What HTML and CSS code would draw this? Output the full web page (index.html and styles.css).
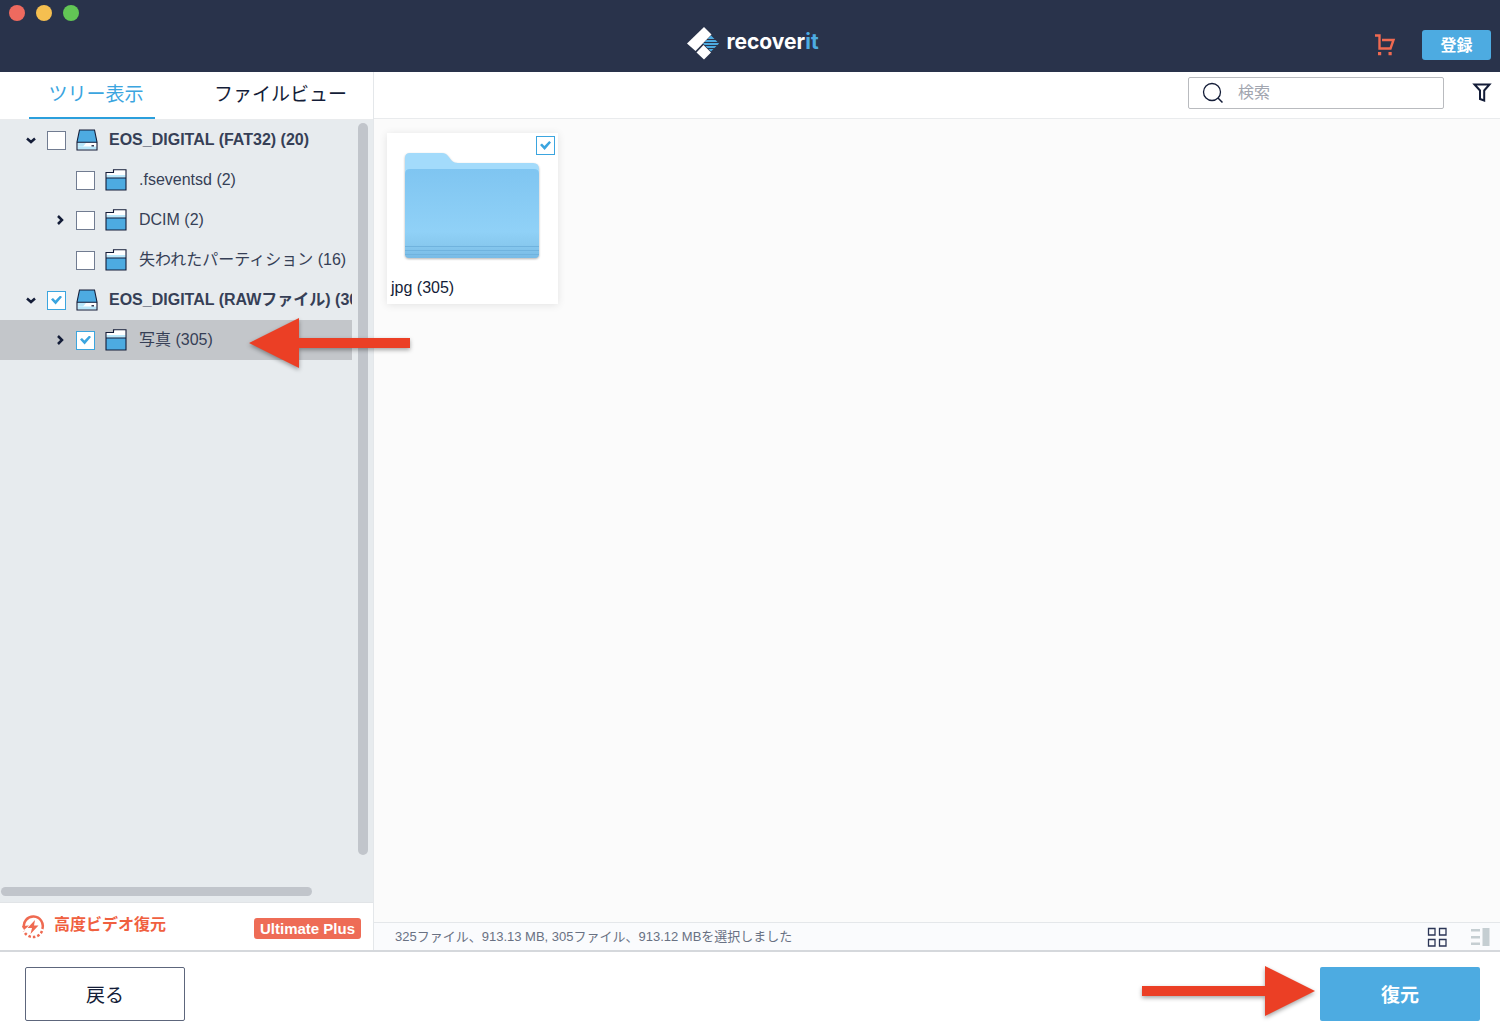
FILE: index.html
```html
<!DOCTYPE html>
<html lang="ja">
<head>
<meta charset="utf-8">
<meta name="viewport" content="width=device-width, initial-scale=1">
<title>recoverit</title>
<link rel="stylesheet" href="styles.css">
</head>
<body>
<svg class="defs" width="0" height="0" aria-hidden="true">
  <symbol id="drive" viewBox="0 0 23 23">
    <path d="M3.500 1H18.500L21 13V21H1V13Z" fill="#4dabe1"/>
    <path d="M1 13.500H21V21H1Z" fill="#fff"/>
    <path d="M1.500 14H10L7 17.500H1.500Z" fill="#b9e7fa"/><path d="M1.500 17.500H20.500V20.500H1.500Z" fill="#b9e7fa"/>
    <path d="M3.500 1H18.500L21 13V21H1V13ZM1 13.300H21" fill="none" stroke="#141d38" stroke-width="1.100"/>
    <path d="M15.500 16.800h2.500" stroke="#141d38" stroke-width="1.300"/>
  </symbol>
  <symbol id="folder" viewBox="0 0 23 23">
    <path d="M1 3.500H8L10 .8H21V21H1Z" fill="#fff"/>
    <path d="M1.500 6H20.500V9H1.500Z" fill="#b9e7fa"/>
    <path d="M1 9H21V21H1Z" fill="#4dabe1"/>
    <path d="M1 3.500H8.500V.8H21V21H1ZM1 9H21" fill="none" stroke="#141d38" stroke-width="1.100"/>
  </symbol>
  <symbol id="down" viewBox="0 0 12 12"><path d="M2 4.500L6 8L10 4.500" fill="none" stroke="#141d38" stroke-width="2.500"/></symbol>
  <symbol id="right" viewBox="0 0 12 12"><path d="M4 2L8 6L4 10" fill="none" stroke="#141d38" stroke-width="2.500"/></symbol>
</svg>
<div class="app">
  <header class="titlebar">
    <div class="lights">
      <button class="light light-close" aria-label="閉じる"></button>
      <button class="light light-min" aria-label="最小化"></button>
      <button class="light light-max" aria-label="拡大"></button>
    </div>
    <div class="brand">
      <svg width="33" height="33" viewBox="0 0 33 33" aria-hidden="true">
        <path d="M24 8.500L32 16.500L24 24.500L16 16.500Z" fill="#4dabe1"/>
        <path d="M17 12.500H31M15 15.500H33M15 18.500H33M17 21.500H29" stroke="#29334b" stroke-width="1"/>
        <path d="M17 0L24.500 7.500L8.500 24L0 16.500Z" fill="#fff"/>
        <path d="M16.500 18L24 25.500L17 32.500L9.500 25.500Z" fill="#fff"/>
      </svg>
      <span class="brand-name">recover<span class="brand-it">it</span></span>
    </div>
    <div class="account">
      <button class="icon-button" aria-label="カート">
        <svg width="22" height="22" viewBox="0 0 22 22"><path d="M1 1.500H5.500V14.500H16.500L19.500 6H8" fill="none" stroke="#ef6a51" stroke-width="2.400"/><path d="M4 18h3.200v3.200H4zM14.500 18h3.200v3.200h-3.200z" fill="#ef6a51"/></svg>
      </button>
      <button class="register">登録</button>
    </div>
  </header>

  <main class="workspace">
    <aside class="sidebar">
      <div class="tabs">
        <button class="tab tab-active">ツリー表示</button>
        <button class="tab">ファイルビュー</button>
      </div>
      <div class="tree-pane">
        <ul class="tree">
          <li class="row root"><svg class="chevron"><use href="#down"/></svg><input class="check" type="checkbox" id="t1"><svg class="kind"><use href="#drive"/></svg><label for="t1">EOS_DIGITAL (FAT32) (20)</label></li>
          <li class="row child"><span class="chevron"></span><input class="check" type="checkbox" id="t2"><svg class="kind"><use href="#folder"/></svg><label for="t2">.fseventsd (2)</label></li>
          <li class="row child"><svg class="chevron"><use href="#right"/></svg><input class="check" type="checkbox" id="t3"><svg class="kind"><use href="#folder"/></svg><label for="t3">DCIM (2)</label></li>
          <li class="row child"><span class="chevron"></span><input class="check" type="checkbox" id="t4"><svg class="kind"><use href="#folder"/></svg><label for="t4">失われたパーティション (16)</label></li>
          <li class="row root"><svg class="chevron"><use href="#down"/></svg><input class="check" type="checkbox" id="t5" checked><svg class="kind"><use href="#drive"/></svg><label for="t5">EOS_DIGITAL (RAWファイル) (305)</label></li>
          <li class="row child selected"><svg class="chevron"><use href="#right"/></svg><input class="check" type="checkbox" id="t6" checked><svg class="kind"><use href="#folder"/></svg><label for="t6">写真 (305)</label></li>
        </ul>
        <div class="track-y"><div class="thumb-y"></div></div>
        <div class="track-x"><div class="thumb-x"></div></div>
        <svg class="arrow arrow-tree" width="162" height="50" viewBox="0 0 162 50" aria-hidden="true"><path d="M0 25L50 0V20H161V30H50V50Z" fill="#eb3f25"/></svg>
      </div>
      <div class="promo">
        <svg width="24" height="24" viewBox="0 0 24 24" aria-hidden="true">
          <path d="M3 13A9.500 9.500 0 1 1 21.300 14" fill="none" stroke="#ef6a51" stroke-width="2.500"/>
          <path d="M21 16A9.700 9.700 0 0 1 3 16" fill="none" stroke="#ef6a51" stroke-width="2.500" stroke-dasharray="2.500 2"/>
          <path d="M1 11L8 10.500L3 15Z" fill="#ef6a51"/>
          <path d="M14 5L6.500 13H11L9.500 19L17.500 10.500H13Z" fill="#ef6a51"/>
        </svg>
        <a class="promo-link" href="#">高度ビデオ復元</a>
        <span class="badge">Ultimate Plus</span>
      </div>
    </aside>

    <section class="content">
      <div class="toolbar">
        <div class="search">
          <svg width="22" height="22" viewBox="0 0 22 22" aria-hidden="true"><circle cx="10" cy="10" r="8.500" fill="none" stroke="#141d38" stroke-width="1.300"/><path d="M16 16L20.500 20.500" stroke="#141d38" stroke-width="1.500"/></svg>
          <input type="search" placeholder="検索" aria-label="検索">
        </div>
        <button class="icon-button" aria-label="フィルター">
          <svg width="20" height="20" viewBox="0 0 20 20"><path d="M2.500 1.500H17.500L12.200 7.500V17.500L8 16V7.500Z" fill="none" stroke="#141d38" stroke-width="2"/></svg>
        </button>
      </div>
      <div class="files">
        <article class="card">
          <input class="check card-check" type="checkbox" id="jpg" checked>
          <svg class="big-folder" width="137" height="109" viewBox="0 0 137 109" aria-hidden="true">
            <defs><linearGradient id="front" x1="0" y1="0" x2="0" y2="1"><stop offset="0" stop-color="#7fc5f1"/><stop offset=".7" stop-color="#90d1f7"/><stop offset=".85" stop-color="#88c9ef"/><stop offset="1" stop-color="#78bbe6"/></linearGradient></defs>
            <path d="M1 22V6Q1 1 6 1H38Q42 1 44 4L48 9Q50 11 54 11H129Q135 11 135 17V30H1Z" fill="#a3dbfb"/>
            <path d="M1 22Q1 17 6 17H130Q135 17 135 22V102Q135 106 131 106H5Q1 106 1 102Z" fill="url(#front)"/>
            <path d="M1 94.500H135M1 98.500H135M1 102.500H135" stroke="#70b3de" stroke-width="1"/>
          </svg>
          <label class="card-name" for="jpg">jpg (305)</label>
        </article>
      </div>
      <div class="status">
        <span class="status-text">325ファイル、913.13 MB, 305ファイル、913.12 MBを選択しました</span>
        <button class="icon-button" aria-label="グリッド表示">
          <svg width="20" height="20" viewBox="0 0 20 20"><path d="M1.500 1.500h6.500v6.500h-6.500zM12.500 1.500h6.500v6.500h-6.500zM1.500 12.500h6.500v6.500h-6.500zM12.500 12.500h6.500v6.500h-6.500z" fill="none" stroke="#2b3556" stroke-width="1.300"/></svg>
        </button>
        <button class="icon-button" aria-label="リスト表示">
          <svg width="20" height="20" viewBox="0 0 20 20"><path d="M1 2h9v2.500H1zM1 9h9v2.500H1zM1 15.500h9V18H1zM12.500 1h7v18h-7z" fill="#c5ced2"/></svg>
        </button>
      </div>
    </section>
  </main>

  <footer class="actions">
    <button class="action back">戻る</button>
    <button class="action recover">復元</button>
    <svg class="arrow arrow-recover" width="173" height="50" viewBox="0 0 173 50" aria-hidden="true"><path d="M173 25L123 0V20H0V30H123V50Z" fill="#eb3f25"/></svg>
  </footer>
</div>
</body>
</html>
```
FILE: styles.css
```css
* { box-sizing: border-box; }

body {
  margin: 0;
  font-family: "Liberation Sans", "Noto Sans CJK JP", sans-serif;
  font-size: 16px;
  line-height: 24px;
  color: #141d38;
  background: #fff;
}

button, input { font: inherit; color: inherit; }
button { padding: 0; border: 0; background: none; cursor: pointer; }
svg { display: block; flex: none; }
.defs { position: absolute; }

.app { display: flex; flex-direction: column; min-height: 100vh; }

/* Title bar */
.titlebar {
  display: grid;
  grid-template-columns: 1fr auto 1fr;
  height: 72px;
  padding: 0 9px;
  background: #29334b;
}
.lights { display: flex; align-items: flex-start; gap: 11px; padding-top: 5px; }
.light { width: 16px; height: 16px; border-radius: 50%; }
.light-close { background: #ee6a5f; }
.light-min { background: #f5bf50; }
.light-max { background: #62c655; }
.brand { display: flex; align-items: center; gap: 6px; padding: 14px 0 0 6px; }
.brand-name { padding-bottom: 2px; font-family: Inter, sans-serif; font-size: 21px; font-weight: 700; color: #fff; }
.brand-it { color: #4dabe1; }
.account { display: flex; align-items: center; justify-content: flex-end; gap: 26px; padding-top: 18px; }
.register {
  width: 69px;
  height: 30px;
  padding-top: 2px;
  border-radius: 3px;
  background: #4dabe1;
  color: #fff;
  font-weight: 700;
}

/* Sidebar */
.workspace { display: grid; grid-template-columns: 374px 1fr; flex: 1; }
.sidebar { display: flex; flex-direction: column; border-right: 1px solid #e4e7ea; }
.tabs { display: flex; height: 48px; padding: 0 21px 0 29px; justify-content: space-between; border-bottom: 1px solid #e9ebed; }
.tab { height: 47px; padding: 0 5px 2px; font-size: 19px; }
.tab-active { width: 126px; padding: 2px 0 2px 8px; border-bottom: 2px solid #2b9fdc; color: #3ba5df; }
.tree-pane {
  position: relative;
  display: grid;
  grid-template-columns: 352px 1fr;
  grid-template-rows: 1fr 20px;
  flex: 1;
  background: #e7ebee;
}
.tree { min-width: 0; margin: 0; padding: 0; overflow: hidden; list-style: none; }
.row { display: flex; align-items: center; gap: 10px; height: 40px; padding-left: 25px; white-space: nowrap; color: #363f56; }
.root { font-weight: 700; }
.child { padding-left: 54px; }
.child label { padding-left: 1px; }
.selected { background: #c3c6ca; }
.chevron { flex: none; width: 12px; height: 12px; }
.kind { width: 23px; height: 23px; }
.check {
  display: grid;
  place-items: center;
  flex: none;
  appearance: none;
  width: 19px;
  height: 19px;
  margin: 0;
  border: 1px solid #717c91;
  background: #fff;
}
.check:checked { border-color: #3ba5df; }
.check:checked::before {
  content: "";
  width: 11px;
  height: 9px;
  background: #3ba5df;
  clip-path: polygon(0 45%, 18% 28%, 40% 55%, 84% 0, 100% 16%, 42% 100%);
}
.track-y { padding: 3px 5px 27px 6px; }
.thumb-y { height: 100%; border-radius: 5px; background: #c1c5cb; }
.track-x { padding: 5px 0 0 1px; }
.thumb-x { width: 311px; height: 9px; border-radius: 5px; background: #c1c5cb; }
.promo { display: flex; align-items: center; gap: 9px; height: 48px; padding: 0 12px 0 21px; border-top: 1px solid #e1e4e7; }
.promo-link { flex: 1; padding-bottom: 3px; color: #f0603f; font-weight: 700; text-decoration: none; }
.badge {
  height: 21px;
  margin-top: 3px;
  padding: 0 6px;
  border-radius: 3px;
  background: #ee6c56;
  color: #fff;
  font-size: 15px;
  font-weight: 700;
  line-height: 22px;
}

/* File view */
.content { display: flex; flex-direction: column; min-width: 0; background: #fbfbfb; }
.toolbar {
  display: flex;
  align-items: center;
  justify-content: flex-end;
  gap: 28px;
  height: 47px;
  padding: 0 8px 4px 0;
  border-bottom: 1px solid #e9ebed;
  background: #fff;
}
.search {
  display: flex;
  align-items: center;
  gap: 14px;
  width: 256px;
  height: 32px;
  padding: 0 8px 0 13px;
  border: 1px solid #b9bbbf;
  border-radius: 2px;
}
.search input { width: 100%; min-width: 0; padding: 0; border: 0; outline: 0; background: none; }
.search input::placeholder { color: #a2a6b0; }
.files { flex: 1; padding: 14px 13px; }
.card {
  position: relative;
  display: flex;
  flex-direction: column;
  width: 171px;
  height: 171px;
  padding: 19px 4px 4px;
  background: #fff;
  box-shadow: 0 1px 8px rgba(0, 0, 0, .1);
}
.card-check { position: absolute; top: 3px; right: 3px; }
.big-folder { align-self: center; filter: drop-shadow(0 1px 1px rgba(0, 0, 0, .3)); }
.card-name { margin-top: auto; }
.status {
  display: flex;
  align-items: center;
  gap: 23px;
  height: 28px;
  padding: 0 10px 0 21px;
  border-top: 1px solid #e4e7ea;
  background: #fafbfd;
}
.status-text { flex: 1; color: #697183; font-size: 13px; }

/* Footer */
.actions {
  position: relative;
  display: flex;
  justify-content: space-between;
  padding: 15px 20px 12px 25px;
  border-top: 2px solid #d5d8dc;
  background: #fff;
}
.action { width: 160px; height: 54px; padding-top: 4px; border-radius: 2px; font-size: 19px; }
.back { border: 1px solid #5d667c; }
.recover { background: #4dabe1; color: #fff; font-weight: 700; }

.arrow { position: absolute; filter: drop-shadow(0 2px 2px rgba(0, 0, 0, .35)); }
.arrow-tree { top: 198px; left: 249px; z-index: 1; }
.arrow-recover { top: 14px; right: 185px; }
```
